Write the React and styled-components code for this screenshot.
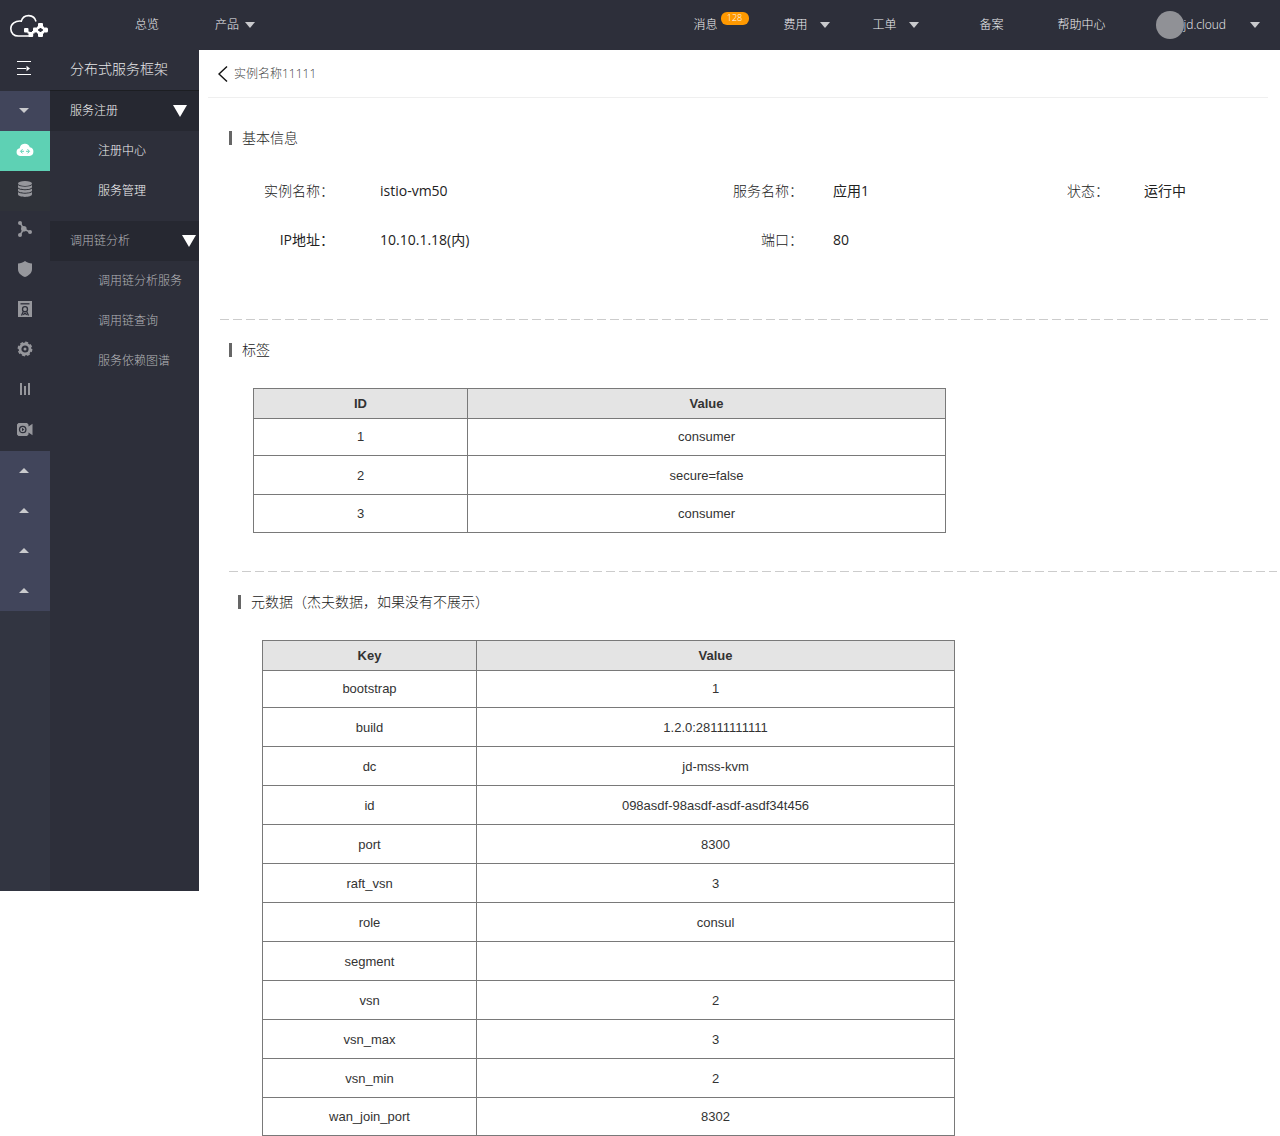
import React from 'react';
import styled, { createGlobalStyle } from 'styled-components';

const GlobalStyle = createGlobalStyle`
  *, *::before, *::after { box-sizing: border-box; }
  body {
    margin: 0;
    background: #fff;
    color: #222;
    font-family: 'Open Sans', 'Noto Sans CJK SC', sans-serif;
    font-size: 12px;
    font-weight: 300;
  }
  a { color: inherit; text-decoration: none; }
  button { border: 0; padding: 0; background: none; color: inherit; font: inherit; cursor: pointer; }
  h1, h2, dl, dd, ul { margin: 0; padding: 0; font: inherit; }
  ul { list-style: none; }
  svg { display: block; flex: none; }
`;

const Header = styled.header`
  display: flex;
  align-items: center;
  height: 50px;
  padding: 0 20px 0 10px;
  background: #2d2f3a;
  color: #f0f0f2;
  line-height: 20px;
`;

const Logo = styled.a`
  display: block;
  width: 40px;
`;

const Nav = styled.nav`
  display: flex;
  align-items: center;
  margin-left: ${(p) => (p.$end ? 'auto' : '0')};
`;

const NavLink = styled.a`
  display: flex;
  margin-left: ${(p) => p.$before}px;
`;

const NavButton = styled.button`
  display: flex;
  align-items: center;
  gap: ${(p) => p.$gap}px;
  margin-left: ${(p) => p.$before}px;
`;

const Badge = styled.span`
  width: 28px;
  height: 13px;
  margin: -3px 0 0 3px;
  border-radius: 6px;
  background: #ff9900;
  color: #fff;
  font-size: 9px;
  line-height: 12px;
  text-align: center;
`;

const Account = styled.span`
  display: flex;
  align-items: center;
`;

const Avatar = styled.span`
  width: 28px;
  height: 28px;
  border-radius: 50%;
  background: #909196;
`;

const Body = styled.div`
  display: flex;
  align-items: flex-start;
`;

const Sidebar = styled.aside`
  display: flex;
  flex: none;
  width: 199px;
  min-height: 841px;
  background: #2d2f3a;
`;

const Rail = styled.nav`
  display: flex;
  flex-direction: column;
  width: 50px;
  background: #323541;
`;

const railColors = {
  plain: '#2d2f3a',
  dim: '#2f3239',
  group: '#41455b',
  active: '#5ed1b4',
};

const RailButton = styled.button`
  display: flex;
  align-items: center;
  justify-content: center;
  height: 40px;
  padding-bottom: ${(p) => (p.$tone === 'group' ? 2 : 4)}px;
  padding-right: ${(p) => (p.$tone === 'group' || p.$toggle ? 2 : 0)}px;
  background: ${(p) => railColors[p.$tone]};
  color: ${(p) => (p.$tone === 'active' || p.$toggle ? '#fff' : '#96979c')};
`;

const RailTop = styled.div`
  display: flex;
  flex-direction: column;
  height: 41px;
  background: #2d2f3a;
`;

const Menu = styled.nav`
  flex: 1;
  color: #e6e6e8;
`;

const MenuTitle = styled.h1`
  height: 41px;
  padding-left: 20px;
  border-bottom: 1px solid #1c1e22;
  font-size: 14px;
  line-height: 38px;
`;

const MenuGroup = styled.section`
  margin-bottom: 10px;
  color: ${(p) => (p.$muted ? '#b4b5b9' : '#f5f5f6')};
`;

const GroupButton = styled.button`
  display: flex;
  align-items: center;
  justify-content: space-between;
  width: 100%;
  height: 40px;
  padding: 0 ${(p) => p.$end}px 0 20px;
  background: #262831;
  line-height: 20px;
`;

const MenuLink = styled.a`
  display: block;
  padding-left: 48px;
  line-height: 40px;
`;

const Main = styled.main`
  flex: 1;
  min-width: 0;
`;

const Breadcrumb = styled.a`
  display: flex;
  align-items: center;
  gap: 6px;
  height: 48px;
  margin: 0 12px 0 9px;
  padding-left: 10px;
  border-bottom: 1px solid #efefef;
  color: #444;
  line-height: 20px;
`;

const Section = styled.section`
  margin: ${(p) => (p.$indent ? '0 3px 0 30px' : '0 12px 0 21px')};
  padding: ${(p) => (p.$first ? '30px 0 55px' : '0 0 38px')};

  &:last-child { padding-bottom: 0; }
`;

const Divider = styled.div`
  height: 1px;
  margin-bottom: 20px;
  background: repeating-linear-gradient(to right, #ccc 0 9px, transparent 9px 13px);
`;

const SectionTitle = styled.h2`
  display: flex;
  align-items: center;
  gap: 10px;
  padding-left: 9px;
  font-size: 14px;
  line-height: 20px;

  &::before {
    content: '';
    width: 3px;
    height: 14px;
    background: #666;
  }
`;

const Details = styled.dl`
  display: grid;
  grid-template-columns: 513fr 334fr 201fr;
  grid-auto-rows: 49px;
  margin-top: 18px;
  font-size: 14px;
  line-height: 20px;
`;

const Detail = styled.div`
  display: flex;
  align-items: center;
  gap: ${(p) => p.$gap}px;

  dt { width: ${(p) => p.$label}px; text-align: right; font-weight: ${(p) => (p.$strong ? 400 : 300)}; }
  dd { font-weight: ${(p) => (p.$medium ? 500 : 400)}; }
`;

const Table = styled.table`
  width: calc(100% - 33px);
  max-width: 693px;
  margin: 28px 0 0 33px;
  border-collapse: collapse;
  table-layout: fixed;
  color: #333;
  font-family: 'Liberation Sans', Arial, sans-serif;
  font-size: 13px;
  font-weight: 400;
  line-height: 16px;
  text-align: center;

  th, td { border: 1px solid #797979; padding: 0; }
  th { height: 30px; background: #e4e4e4; font-weight: 700; }
  th:first-child { width: 214px; }
  td { height: 39px; padding-top: 1px; }
  tbody tr:first-child td { height: 37px; padding-top: 0; }
  tbody tr:last-child td { height: 38px; }
`;

const Caret = ({ up, width = 10, height = 6, color = '#c9cacd' }) => (
  <svg width={width} height={height} viewBox="0 0 10 6" preserveAspectRatio="none" fill={color} aria-hidden="true">
    <path d={up ? 'M5 0 10 6H0z' : 'M0 0h10L5 6z'} />
  </svg>
);

const LogoMark = () => (
  <svg width="39" height="24" viewBox="0 0 39 24" aria-hidden="true">
    <path
      d="M26 8.500A7.600 7.600 0 0 0 11.300 8.100C5.200 7.500.8 11 .8 15.800c0 4.400 3.200 7.200 7.400 7.200H21"
      fill="none"
      stroke="#fff"
      strokeWidth="1.600"
    />
    <g fill="#fff">
      <rect x="14" y="15" width="4.500" height="4.500" rx="1" />
      <rect x="18.500" y="19" width="4.700" height="5" rx="1" />
      <rect x="23" y="14.500" width="5.200" height="5" rx="1" />
      <rect x="28" y="10" width="5" height="5" rx="1" />
      <rect x="32.800" y="14.500" width="5.200" height="5" rx="1.500" />
      <rect x="28" y="19" width="5" height="5" rx="1" />
      <path d="M27 13.500h2.500v2.500H27zM31.500 13.500H34v2.500h-2.500zM27 18h2.500v2.500H27zM31.500 18H34v2.500h-2.500zM22 18h2.500v2.500H22zM17.500 18.500h2v2h-2z" />
    </g>
  </svg>
);

const ToggleIcon = () => (
  <svg width="14" height="14" viewBox="0 0 14 14" aria-hidden="true">
    <path d="M0 .5h14M0 7.500h9M0 13.500h14" stroke="#fff" />
    <path d="M9.500 4.800 13 7.500 9.500 10.200z" fill="#fff" />
  </svg>
);

const CloudIcon = () => (
  <svg width="18" height="13" viewBox="0 0 18 13" aria-hidden="true">
    <path d="M4 13a3.900 3.900 0 0 1-.3-7.700A5.200 5.200 0 0 1 13.800 4.300 4.400 4.400 0 0 1 13.500 13z" fill="currentColor" />
    <path d="M6.500 6.200 4.500 8.300l2 2.100M11.500 6.200l2 2.100-2 2.100M5 8.300h3M10 8.300h3" fill="none" stroke="#5ed1b4" />
  </svg>
);

const DatabaseIcon = () => (
  <svg width="14" height="16" viewBox="0 0 14 16" fill="currentColor" aria-hidden="true">
    <ellipse cx="7" cy="2.500" rx="7" ry="2.500" />
    <path d="M0 4c1.500 2.300 12.500 2.300 14 0v2c0 3-14 3-14 0z" />
    <path d="M0 7.500c1.500 2.300 12.500 2.300 14 0v2c0 3-14 3-14 0z" />
    <path d="M0 11c1.500 2.300 12.500 2.300 14 0v2.300c0 3.500-14 3.500-14 0z" />
  </svg>
);

const NetworkIcon = () => (
  <svg width="14" height="16" viewBox="0 0 14 16" fill="currentColor" aria-hidden="true">
    <path d="M2.200 2 5.800 8 2 14M5.800 8l6.200 3" fill="none" stroke="currentColor" strokeWidth="1.500" />
    <circle cx="2" cy="2" r="2" />
    <circle cx="5.800" cy="7.800" r="2.800" />
    <circle cx="2" cy="14" r="2" />
    <circle cx="12" cy="11" r="2" />
  </svg>
);

const ShieldIcon = () => (
  <svg width="14" height="16" viewBox="0 0 14 16" fill="currentColor" aria-hidden="true">
    <path d="M7 0c2 1.600 4.300 2.300 7 2.500V8c0 4-3 6.500-7 8-4-1.500-7-4-7-8V2.500C2.700 2.300 5 1.600 7 0z" />
  </svg>
);

const CertificateIcon = () => (
  <svg width="14" height="16" viewBox="0 0 14 16" aria-hidden="true">
    <path d="M0 0h14v16H0z" fill="currentColor" />
    <g fill="none" stroke="#2d2f3a" strokeWidth="1.300">
      <path d="M2.500 2.800h9" />
      <circle cx="7" cy="8.200" r="2.500" />
      <path d="M5.400 10.200 3.500 14.500M8.600 10.200l1.900 4.300M5.200 13.800 7 12.200l1.800 1.600" />
    </g>
  </svg>
);

const GearIcon = () => (
  <svg width="16" height="16" viewBox="0 0 16 16" fill="none" stroke="currentColor" aria-hidden="true">
    <circle cx="8" cy="8" r="5" strokeWidth="2.800" />
    <circle cx="8" cy="8" r="6.600" strokeWidth="1.600" strokeDasharray="3 2.180" />
    <circle cx="8" cy="8" r="1.500" fill="currentColor" stroke="none" />
  </svg>
);

const BarsIcon = () => (
  <svg width="12" height="12" viewBox="0 0 12 12" fill="currentColor" aria-hidden="true">
    <path d="M1 0h2v12H1zM5 3h2v9H5zM9 0h2v12H9z" />
  </svg>
);

const VideoIcon = () => (
  <svg width="16" height="13" viewBox="0 0 16 13" aria-hidden="true">
    <path d="M1.500 0h8.500L11.500 1.500v2L15.500.8v11.400L11.500 9.500v2L10 13H1.500L0 11.500v-10z" fill="currentColor" />
    <circle cx="5.700" cy="6.500" r="3.200" fill="none" stroke="#2d2f3a" strokeWidth="1.300" />
    <path d="M5 4.800 7.300 6.500 5 8.200z" fill="#2d2f3a" />
  </svg>
);

const BackIcon = () => (
  <svg width="10" height="16" viewBox="0 0 10 16" fill="none" stroke="#111" strokeWidth="1.400" aria-hidden="true">
    <path d="M9 .5 1 8l8 7.500" />
  </svg>
);

const railIcons = [
  { name: '云服务', Icon: CloudIcon, tone: 'active' },
  { name: '数据库', Icon: DatabaseIcon, tone: 'dim' },
  { name: '网络', Icon: NetworkIcon, tone: 'plain' },
  { name: '安全', Icon: ShieldIcon, tone: 'plain' },
  { name: '证书', Icon: CertificateIcon, tone: 'plain' },
  { name: '设置', Icon: GearIcon, tone: 'plain' },
  { name: '监控', Icon: BarsIcon, tone: 'plain' },
  { name: '视频', Icon: VideoIcon, tone: 'plain' },
];

const menu = [
  { title: '服务注册', end: 12, items: ['注册中心', '服务管理'] },
  { title: '调用链分析', end: 3, muted: true, items: ['调用链分析服务', '调用链查询', '服务依赖图谱'] },
];

const details = [
  { name: '实例名称', value: 'istio-vm50', label: 114, gap: 46, medium: true },
  { name: '服务名称', value: '应用1', label: 70, gap: 30 },
  { name: '状态', value: '运行中', label: 42, gap: 35 },
  { name: 'IP地址', value: '10.10.1.18(内)', label: 114, gap: 46, strong: true },
  { name: '端口', value: '80', label: 70, gap: 30 },
];

const tags = [['1', 'consumer'], ['2', 'secure=false'], ['3', 'consumer']];

const metadata = [
  ['bootstrap', '1'],
  ['build', '1.2.0:28111111111'],
  ['dc', 'jd-mss-kvm'],
  ['id', '098asdf-98asdf-asdf-asdf34t456'],
  ['port', '8300'],
  ['raft_vsn', '3'],
  ['role', 'consul'],
  ['segment', ''],
  ['vsn', '2'],
  ['vsn_max', '3'],
  ['vsn_min', '2'],
  ['wan_join_port', '8302'],
];

const DataTable = ({ head, rows }) => (
  <Table>
    <thead>
      <tr>{head.map((h) => <th key={h} scope="col">{h}</th>)}</tr>
    </thead>
    <tbody>
      {rows.map(([key, value]) => (
        <tr key={key}>
          <td>{key}</td>
          <td>{value}</td>
        </tr>
      ))}
    </tbody>
  </Table>
);

export default function App() {
  return (
    <>
      <GlobalStyle />
      <Header>
        <Logo href="#" aria-label="jd.cloud"><LogoMark /></Logo>
        <Nav>
          <NavLink href="#" $before={85}>总览</NavLink>
          <NavButton type="button" $before={56} $gap={6}>产品<Caret /></NavButton>
        </Nav>
        <Nav $end>
          <NavLink href="#" $before={0}>消息<Badge>128</Badge></NavLink>
          <NavButton type="button" $before={35} $gap={12}>费用<Caret /></NavButton>
          <NavButton type="button" $before={43} $gap={12}>工单<Caret /></NavButton>
          <NavLink href="#" $before={61}>备案</NavLink>
          <NavLink href="#" $before={54}>帮助中心</NavLink>
          <NavButton type="button" $before={50} $gap={24}>
            <Account><Avatar />jd.cloud</Account>
            <Caret />
          </NavButton>
        </Nav>
      </Header>
      <Body>
        <Sidebar>
          <Rail>
            <RailTop>
              <RailButton type="button" $tone="plain" $toggle aria-label="收起菜单"><ToggleIcon /></RailButton>
            </RailTop>
            <RailButton type="button" $tone="group" aria-label="展开"><Caret height={5} /></RailButton>
            {railIcons.map(({ name, Icon, tone }) => (
              <RailButton key={name} type="button" $tone={tone} aria-label={name}><Icon /></RailButton>
            ))}
            {[1, 2, 3, 4].map((n) => (
              <RailButton key={n} type="button" $tone="group" aria-label={`分组${n}`}><Caret up height={5} /></RailButton>
            ))}
          </Rail>
          <Menu>
            <MenuTitle>分布式服务框架</MenuTitle>
            {menu.map((group) => (
              <MenuGroup key={group.title} $muted={group.muted}>
                <GroupButton type="button" $end={group.end}>
                  {group.title}
                  <Caret width={14} height={12} color="#fff" />
                </GroupButton>
                <ul>
                  {group.items.map((item) => <li key={item}><MenuLink href="#">{item}</MenuLink></li>)}
                </ul>
              </MenuGroup>
            ))}
          </Menu>
        </Sidebar>
        <Main>
          <Breadcrumb href="#"><BackIcon />实例名称11111</Breadcrumb>
          <Section $first>
            <SectionTitle>基本信息</SectionTitle>
            <Details>
              {details.map((d) => (
                <Detail key={d.name} $label={d.label} $gap={d.gap} $strong={d.strong} $medium={d.medium}>
                  <dt>{d.name}：</dt>
                  <dd>{d.value}</dd>
                </Detail>
              ))}
            </Details>
          </Section>
          <Section>
            <Divider />
            <SectionTitle>标签</SectionTitle>
            <DataTable head={['ID', 'Value']} rows={tags} />
          </Section>
          <Section $indent>
            <Divider />
            <SectionTitle>元数据（杰夫数据，如果没有不展示）</SectionTitle>
            <DataTable head={['Key', 'Value']} rows={metadata} />
          </Section>
        </Main>
      </Body>
    </>
  );
}
